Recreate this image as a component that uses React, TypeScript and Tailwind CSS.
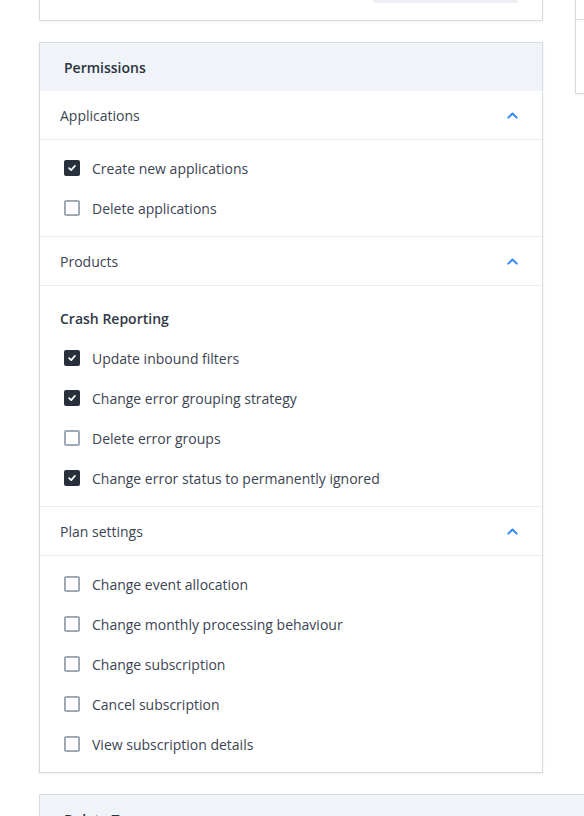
import React from 'react';

type Perm = { label: string; checked: boolean };

type Section = {
  title: string;
  groups: { heading?: string; items: Perm[] }[];
};

const sections: Section[] = [
  {
    title: 'Applications',
    groups: [
      {
        items: [
          { label: 'Create new applications', checked: true },
          { label: 'Delete applications', checked: false },
        ],
      },
    ],
  },
  {
    title: 'Products',
    groups: [
      {
        heading: 'Crash Reporting',
        items: [
          { label: 'Update inbound filters', checked: true },
          { label: 'Change error grouping strategy', checked: true },
          { label: 'Delete error groups', checked: false },
          { label: 'Change error status to permanently ignored', checked: true },
        ],
      },
    ],
  },
  {
    title: 'Plan settings',
    groups: [
      {
        items: [
          { label: 'Change event allocation', checked: false },
          { label: 'Change monthly processing behaviour', checked: false },
          { label: 'Change subscription', checked: false },
          { label: 'Cancel subscription', checked: false },
          { label: 'View subscription details', checked: false },
        ],
      },
    ],
  },
];

function Checkbox({ checked }: { checked: boolean }) {
  if (checked) {
    return (
      <span className="flex h-4 w-4 shrink-0 items-center justify-center rounded-[2px] bg-[#28313b]">
        <svg viewBox="0 0 12 12" className="h-[10px] w-[10px]" fill="none">
          <path d="M2.5 6.2 L5 8.5 L9.5 3.5" stroke="#fff" strokeWidth="2" strokeLinecap="round" strokeLinejoin="round" />
        </svg>
      </span>
    );
  }
  return <span className="h-4 w-4 shrink-0 rounded-[2px] border-2 border-[#9ea9b5] bg-white" />;
}

function ChevronUp() {
  return (
    <svg viewBox="0 0 12 8" className="h-[7px] w-[11px]" fill="none">
      <path d="M1.2 6.5 L6 1.7 L10.8 6.5" stroke="#2f86f6" strokeWidth="2.2" strokeLinecap="round" strokeLinejoin="round" />
    </svg>
  );
}

function PermissionSection({ section, last }: { section: Section; last: boolean }) {
  return (
    <div className={last ? '' : 'border-b border-[#e9edf1]'}>
      <div className="flex h-[49px] items-center justify-between border-b border-[#e9edf1] pl-5 pr-6">
        <span className="text-[14px] text-[#3b4452]">{section.title}</span>
        <ChevronUp />
      </div>
      <div className="py-2">
        {section.groups.map((g, gi) => (
          <div key={gi}>
            {g.heading && (
              <div className="mt-1 flex h-10 items-center px-5 text-[14px] font-semibold text-[#2f3844]">
                {g.heading}
              </div>
            )}
            {g.items.map((it) => (
              <label key={it.label} className="flex h-10 items-center gap-3 pl-6">
                <Checkbox checked={it.checked} />
                <span className="text-[14px] text-[#3b4452]">{it.label}</span>
              </label>
            ))}
          </div>
        ))}
      </div>
    </div>
  );
}

export default function App() {
  return (
    <div
      className="h-[816px] w-[584px] overflow-hidden bg-white"
      style={{ fontFamily: '"Open Sans", "Noto Sans", sans-serif' }}
    >
      <div className="mt-[-58px] flex w-[900px] flex-col gap-[21px] pl-[39px]">
        <div className="flex gap-8">
          <div className="flex w-[504px] flex-col gap-[21px]">
            <div className="rounded-[1px] border border-[#d3dbe3] bg-white px-6 pb-[17px] pt-6 shadow-[0_1px_3px_rgba(0,0,0,0.06)]">
              <div className="flex justify-end">
                <div className="h-9 w-[145px] rounded-[3px] bg-[#edf0f4]" />
              </div>
            </div>

            <div className="border border-[#d3dbe3] bg-white shadow-[0_1px_3px_rgba(0,0,0,0.07)]">
              <div className="flex h-12 items-center bg-[#f0f4f8] px-6">
                <h2 className="text-[14px] font-semibold text-[#2a333e]">Permissions</h2>
              </div>
              {sections.map((s, i) => (
                <PermissionSection key={s.title} section={s} last={i === sections.length - 1} />
              ))}
            </div>
          </div>

          <div className="h-[152px] w-[300px] self-start border border-[#d3dbe3] bg-white shadow-[0_1px_3px_rgba(0,0,0,0.06)]">
            <div className="h-[77px] border-b border-[#d3dbe3]" />
          </div>
        </div>

        <div className="border border-[#d3dbe3] bg-white">
          <div className="flex h-12 items-center bg-[#f0f4f8] px-6">
            <h2 className="text-[14px] font-semibold text-[#2a333e]">Delete Team</h2>
          </div>
        </div>
      </div>
    </div>
  );
}
